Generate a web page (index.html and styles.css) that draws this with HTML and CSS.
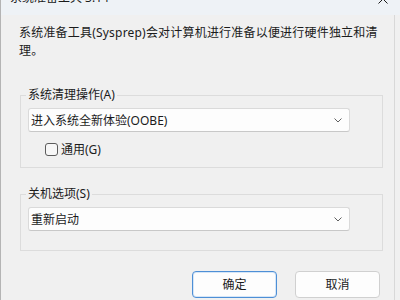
FILE: index.html
```html
<!DOCTYPE html>
<html lang="zh-CN">
<head>
<meta charset="UTF-8">
<title>系统准备工具 3.14</title>
<link rel="stylesheet" href="styles.css">
</head>
<body>
    <div class="window">
        <div class="titlebar">
            <span class="title">系统准备工具 3.14</span>
            <svg class="close" width="10" height="10" viewBox="0 0 10 10">
                <path d="M0.5 0.5 L9.5 9.5 M9.5 0.5 L0.5 9.5" stroke="#1b1b1b" stroke-width="1" fill="none"/>
            </svg>
        </div>
        <div class="content">
            <p class="desc">系统准备工具(Sysprep)会对计算机进行准备以便进行硬件独立和清<br>理。</p>

            <fieldset class="group">
                <legend>系统清理操作(A)</legend>
                <div class="select">
                    <span>进入系统全新体验(OOBE)</span>
                    <svg width="8" height="5" viewBox="0 0 8 5">
                        <path d="M0.5 0.5 L4 4 L7.5 0.5" stroke="#606060" stroke-width="1" fill="none"/>
                    </svg>
                </div>
                <label class="check">
                    <span class="box"></span>
                    <span>通用(G)</span>
                </label>
            </fieldset>

            <fieldset class="group second">
                <legend>关机选项(S)</legend>
                <div class="select">
                    <span>重新启动</span>
                    <svg width="8" height="5" viewBox="0 0 8 5">
                        <path d="M0.5 0.5 L4 4 L7.5 0.5" stroke="#606060" stroke-width="1" fill="none"/>
                    </svg>
                </div>
            </fieldset>

            <div class="buttons">
                <button class="btn primary">确定</button>
                <button class="btn">取消</button>
            </div>
        </div>
    </div>
</body>
</html>
```

FILE: styles.css
```css
body {
    margin: 0;
    padding: 0;
    background-color: #f0f0f0;
    font-family: "Noto Sans", "Noto Sans CJK SC", sans-serif;
    font-size: 12px;
    color: #1b1b1b;
    overflow: hidden;
}
.window {
    width: 400px;
    height: 300px;
    border-left: 1px solid #b4b4b4;
    box-sizing: border-box;
}
.titlebar {
    height: 15px;
    background-color: #eef2f6;
    display: flex;
    justify-content: space-between;
    align-items: flex-start;
    overflow: hidden;
    padding-left: 9px;
}
.title {
    display: block;
    line-height: 16px;
    margin-top: -10px;
}
.close {
    margin-top: -6px;
    margin-right: 12px;
}
.content {
    width: 394px;
    height: 285px;
    border-right: 1px solid #d8d8d8;
    padding: 9px 0 0 18px;
    box-sizing: border-box;
}
.desc {
    margin: 0;
    line-height: 18px;
    white-space: nowrap;
    letter-spacing: 0.2px;
}
.group {
    margin: 28px 0 0 1px;
    padding: 6px 31px 11px 7px;
    width: 363px;
    box-sizing: border-box;
    border: 1px solid #dcdcdc;
    border-radius: 0;
}
.group legend {
    padding: 0 2px;
    margin-left: -2px;
    line-height: 14px;
}
.group.second {
    margin-top: 19px;
    padding-bottom: 19px;
}
.select {
    width: 322px;
    height: 24px;
    box-sizing: border-box;
    background-color: #fdfdfd;
    border: 1px solid #dadada;
    border-bottom-color: #c8c8c8;
    border-radius: 3px;
    display: flex;
    align-items: center;
    justify-content: space-between;
    padding: 0 7px 0 2px;
}
.check {
    display: flex;
    align-items: center;
    gap: 3px;
    margin: 11px 0 0 17px;
    height: 13px;
    line-height: 13px;
}
.box {
    width: 13px;
    height: 13px;
    box-sizing: border-box;
    border: 1px solid #5c5c5c;
    border-radius: 3px;
    background-color: #f7f7f7;
}
.buttons {
    display: flex;
    justify-content: flex-end;
    gap: 18px;
    margin-top: 20px;
    margin-right: 14px;
}
.btn {
    width: 85px;
    height: 27px;
    font-family: inherit;
    font-size: 12px;
    color: #1b1b1b;
    background-color: #fdfdfd;
    border: 1px solid #d0d0d0;
    border-radius: 4px;
    padding: 0 0 2px 0;
}
.btn.primary {
    border: 1px solid #4d8fd6;
    box-shadow: inset 0 0 0 1px #d6e6f7;
}
```
